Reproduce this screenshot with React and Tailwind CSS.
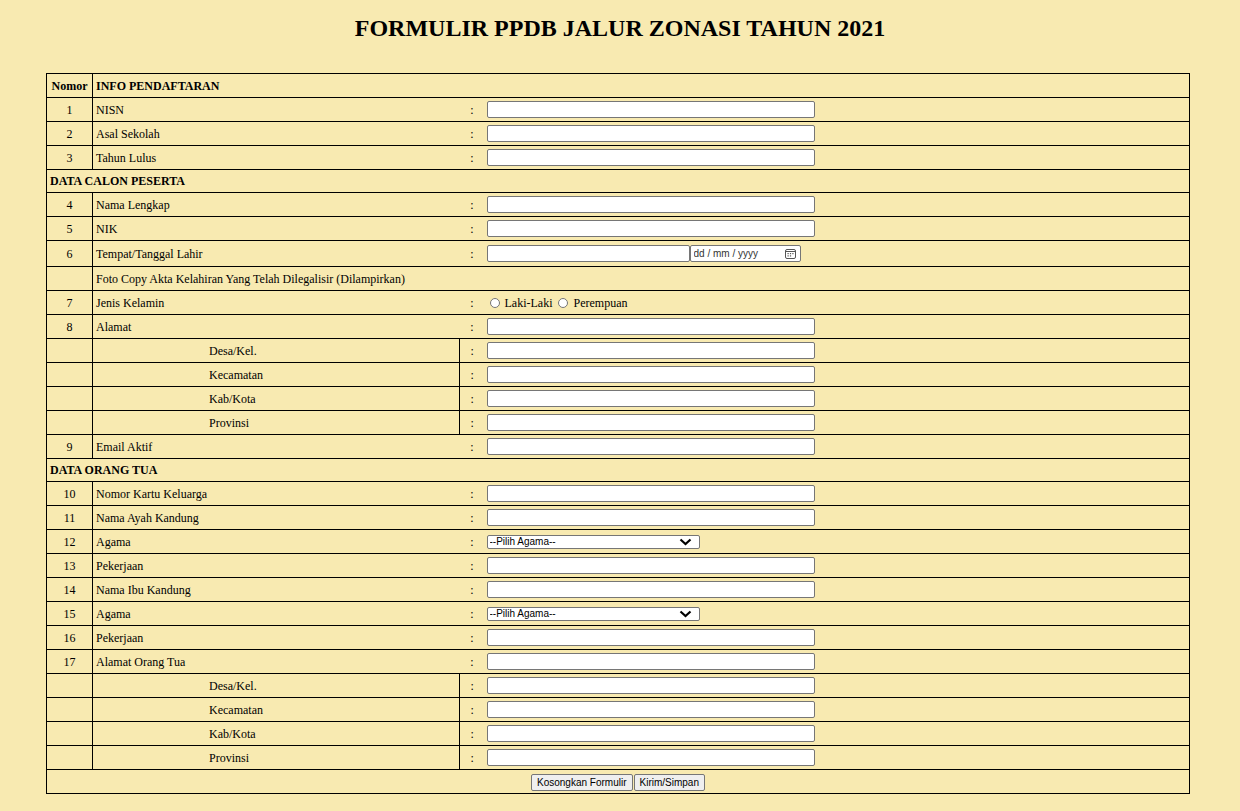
import React from "react";

const serif = { fontFamily: '"Liberation Serif", "Times New Roman", serif' };
const sans = { fontFamily: '"Liberation Sans", Arial, sans-serif' };

function TextBox({ w = "w-[328px]" }) {
  return (
    <input
      type="text"
      className={`block ${w} h-[17px] bg-white border border-[#767676] rounded-[2px] px-[2px] text-[12px] outline-none`}
    />
  );
}

function AgamaSelect() {
  return (
    <div className="relative w-[213px] h-[14px]">
      <select
        className="appearance-none block w-full h-full bg-white border border-[#767676] rounded-[2px] pl-[2px] text-[10px] leading-[12px] text-black outline-none"
        style={sans}
      >
        <option>--Pilih Agama--</option>
        <option>Islam</option>
        <option>Kristen</option>
        <option>Katolik</option>
        <option>Hindu</option>
        <option>Buddha</option>
        <option>Konghucu</option>
      </select>
      <svg className="absolute right-[8px] top-[3px] pointer-events-none" width="13" height="8" viewBox="0 0 13 8">
        <path d="M1.5 1.5 L6.5 6 L11.5 1.5" fill="none" stroke="#000" strokeWidth="2.2" />
      </svg>
    </div>
  );
}

function DateBox() {
  return (
    <div className="relative w-[111px] h-[17px]">
      <input
        type="text"
        placeholder="dd / mm / yyyy"
        className="block w-full h-full bg-white border border-[#767676] rounded-[2px] pl-[3px] text-[10px] outline-none placeholder:text-[#333]"
        style={sans}
      />
      <svg className="absolute right-[5px] top-[3px] pointer-events-none" width="11" height="11" viewBox="0 0 11 11">
        <rect x="0.5" y="1.5" width="10" height="9" rx="1.5" fill="none" stroke="#555" strokeWidth="1" />
        <line x1="0.5" y1="3.5" x2="10.5" y2="3.5" stroke="#555" strokeWidth="1" />
        <rect x="2.5" y="5" width="1.2" height="1.2" fill="#555" />
        <rect x="4.9" y="5" width="1.2" height="1.2" fill="#555" />
        <rect x="7.3" y="5" width="1.2" height="1.2" fill="#555" />
        <rect x="2.5" y="7.3" width="1.2" height="1.2" fill="#555" />
        <rect x="4.9" y="7.3" width="1.2" height="1.2" fill="#555" />
      </svg>
    </div>
  );
}

function Radio({ name, label }) {
  return (
    <label className="inline-flex items-center">
      <input
        type="radio"
        name={name}
        className="appearance-none w-[10px] h-[10px] rounded-full border border-[#767676] bg-white mr-[5px] ml-[3px]"
      />
      <span>{label}</span>
    </label>
  );
}

function Row({ no, label, children, h = "h-[24px]" }) {
  return (
    <tr className={`${h} border-b border-black`}>
      <td className="border-r border-black text-center">{no}</td>
      <td className="pl-[3px]">{label}</td>
      <td className="text-center">:</td>
      <td className="pl-[2px]">{children}</td>
    </tr>
  );
}

function SubRow({ label }) {
  return (
    <tr className="h-[24px] border-b border-black">
      <td className="border-r border-black"></td>
      <td className="pl-[116px] border-r border-black">{label}</td>
      <td className="text-center">:</td>
      <td className="pl-[2px]">
        <TextBox />
      </td>
    </tr>
  );
}

function Section({ title }) {
  return (
    <tr className="h-[23px] border-b border-black">
      <td colSpan={4} className="pl-[3px] font-bold">
        {title}
      </td>
    </tr>
  );
}

export default function App() {
  const alamat = ["Desa/Kel.", "Kecamatan", "Kab/Kota", "Provinsi"];

  return (
    <div className="min-h-[811px] bg-[#f8eab1] text-black" style={serif}>
      <h2 className="pt-[14px] h-[73px] text-center text-[24px] leading-[28px] font-bold">
        FORMULIR PPDB JALUR ZONASI TAHUN 2021
      </h2>

      <table className="ml-[46px] w-[1144px] table-fixed border-collapse border border-black text-[12px]">
        <colgroup>
          <col className="w-[46px]" />
          <col className="w-[367px]" />
          <col className="w-[25px]" />
          <col />
        </colgroup>
        <tbody>
          <tr className="h-[24px] border-b border-black font-bold">
            <td className="border-r border-black text-center">Nomor</td>
            <td colSpan={3} className="pl-[3px]">INFO PENDAFTARAN</td>
          </tr>
          <Row no="1" label="NISN"><TextBox /></Row>
          <Row no="2" label="Asal Sekolah"><TextBox /></Row>
          <Row no="3" label="Tahun Lulus"><TextBox /></Row>

          <Section title="DATA CALON PESERTA" />
          <Row no="4" label="Nama Lengkap"><TextBox /></Row>
          <Row no="5" label="NIK"><TextBox /></Row>
          <Row no="6" label="Tempat/Tanggal Lahir" h="h-[26px]">
            <div className="flex">
              <TextBox w="w-[203px]" />
              <DateBox />
            </div>
          </Row>
          <tr className="h-[24px] border-b border-black">
            <td className="border-r border-black"></td>
            <td colSpan={3} className="pl-[3px]">
              Foto Copy Akta Kelahiran Yang Telah Dilegalisir (Dilampirkan)
            </td>
          </tr>
          <Row no="7" label="Jenis Kelamin">
            <div className="flex items-center gap-[3px]">
              <Radio name="jk" label="Laki-Laki" />
              <Radio name="jk" label="Perempuan" />
            </div>
          </Row>
          <Row no="8" label="Alamat"><TextBox /></Row>
          {alamat.map((a) => (
            <SubRow key={"a" + a} label={a} />
          ))}
          <Row no="9" label="Email Aktif"><TextBox /></Row>

          <Section title="DATA ORANG TUA" />
          <Row no="10" label="Nomor Kartu Keluarga"><TextBox /></Row>
          <Row no="11" label="Nama Ayah Kandung"><TextBox /></Row>
          <Row no="12" label="Agama"><AgamaSelect /></Row>
          <Row no="13" label="Pekerjaan"><TextBox /></Row>
          <Row no="14" label="Nama Ibu Kandung"><TextBox /></Row>
          <Row no="15" label="Agama"><AgamaSelect /></Row>
          <Row no="16" label="Pekerjaan"><TextBox /></Row>
          <Row no="17" label="Alamat Orang Tua"><TextBox /></Row>
          {alamat.map((a) => (
            <SubRow key={"o" + a} label={a} />
          ))}

          <tr className="h-[24px]">
            <td colSpan={4} className="text-center">
              <div className="inline-flex gap-[1px] align-middle" style={sans}>
                <button className="h-[17px] px-[5px] bg-[#efefef] border border-[#767676] rounded-[2px] text-[10px] leading-[15px]">
                  Kosongkan Formulir
                </button>
                <button className="h-[17px] px-[5px] bg-[#efefef] border border-[#767676] rounded-[2px] text-[10px] leading-[15px]">
                  Kirim/Simpan
                </button>
              </div>
            </td>
          </tr>
        </tbody>
      </table>
    </div>
  );
}
